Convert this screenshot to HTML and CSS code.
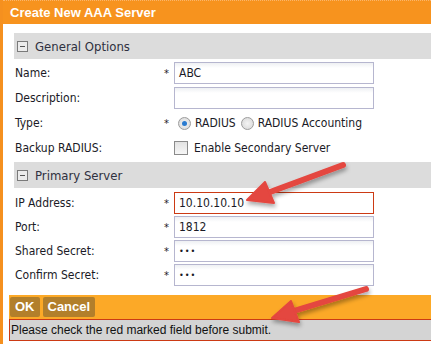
FILE: index.html
```html
<!DOCTYPE html>
<html lang="en">
<head>
    <meta charset="UTF-8">
    <title>Create New AAA Server</title>
    <link rel="stylesheet" href="styles.css">
</head>
<body>
    <div class="dialog">
        <div class="title">Create New AAA Server</div>
        <div class="content">
            <div class="section-head"><span class="minus"></span>General Options</div>
            <div class="rows rows-first">
                <label>Name:</label><span class="req">*</span><div class="field">ABC</div>
                <label>Description:</label><span class="req"></span><div class="field"></div>
                <label>Type:</label><span class="req">*</span>
                <div class="choice">
                    <span class="radio on"></span>RADIUS
                    <span class="radio"></span>RADIUS Accounting
                </div>
                <label>Backup RADIUS:</label><span class="req"></span>
                <div class="choice"><span class="check"></span>Enable Secondary Server</div>
            </div>

            <div class="section-head"><span class="minus"></span>Primary Server</div>
            <div class="rows rows-second">
                <label>IP Address:</label><span class="req">*</span><div class="field bad">10.10.10.10</div>
                <label>Port:</label><span class="req">*</span><div class="field">1812</div>
                <label>Shared Secret:</label><span class="req">*</span><div class="field secret">&bull;&bull;&bull;</div>
                <label>Confirm Secret:</label><span class="req">*</span><div class="field secret">&bull;&bull;&bull;</div>
            </div>
        </div>
        <div class="buttons">
            <span class="btn">OK</span><span class="btn">Cancel</span>
        </div>
        <div class="error">Please check the red marked field before submit.</div>
    </div>

    <!-- annotation arrows drawn over the screenshot -->
    <svg class="arrows" width="431" height="344" viewBox="0 0 431 344">
        <defs>
            <filter id="shade" x="-20%" y="-20%" width="140%" height="160%">
                <feDropShadow dx="1" dy="3" stdDeviation="2" flood-color="#000" flood-opacity="0.35"/>
            </filter>
        </defs>
        <g fill="#e4463f" stroke="#e4463f" filter="url(#shade)">
            <line x1="343" y1="165" x2="262" y2="195" stroke-width="6" stroke-linecap="round"/>
            <polygon points="247,200 274,203 265,182" stroke-width="2" stroke-linejoin="round"/>
            <line x1="366" y1="289" x2="287" y2="313" stroke-width="6" stroke-linecap="round"/>
            <polygon points="272,318 299,322 291,301" stroke-width="2" stroke-linejoin="round"/>
        </g>
    </svg>
</body>
</html>
```

FILE: styles.css
```css
body {
    margin: 0;
    background: #fff;
    font-family: "DejaVu Sans Condensed", "DejaVu Sans", Verdana, sans-serif;
    font-size: 12px;
    color: #1a1a26;
    width: 431px;
    height: 344px;
    overflow: hidden;
    position: relative;
}
.dialog {
    border-left: 3px solid #f5901f;
    height: 344px;
    box-sizing: border-box;
}
.title {
    height: 24px;
    line-height: 24px;
    background: #f7931e;
    border-top: 1px dotted #fbb56a;
    box-sizing: border-box;
    color: #fff;
    font-family: "Liberation Sans", Arial, sans-serif;
    font-weight: bold;
    font-size: 13px;
    padding-left: 7px;
}
.content {
    padding: 9px 0 0 11px;
}
.section-head {
    height: 26px;
    background: #dcdcdc;
    display: flex;
    align-items: center;
    padding-left: 3px;
    font-size: 13px;
    color: #2f3040;
}
.minus {
    width: 9px;
    height: 9px;
    border: 1px solid #7a7a7a;
    margin-right: 7px;
    position: relative;
    background: #ececec;
}
.minus::after {
    content: "";
    position: absolute;
    left: 2px;
    right: 2px;
    top: 4px;
    height: 1px;
    background: #555;
}
.rows {
    display: grid;
    grid-template-columns: 150px 10px 200px;
    grid-auto-rows: 24px;
    align-items: center;
}
.rows-first {
    padding: 2px 0 2px;
    row-gap: 1px;
}
.rows-second {
    padding: 3px 0 0;
}
.rows label {
    padding-left: 1px;
}
.req {
    font-size: 11px;
}
.field {
    height: 22px;
    box-sizing: border-box;
    border: 1px solid #b6b6cf;
    background: linear-gradient(#eef0f3, #fff 5px);
    padding-left: 4px;
    line-height: 20px;
}
.field.bad {
    border-color: #cc3a14;
    background: #fff;
}
.field.secret {
    font-size: 9px;
    letter-spacing: 1px;
}
.choice {
    display: flex;
    align-items: center;
}
.radio {
    width: 11px;
    height: 11px;
    border-radius: 50%;
    border: 1px solid #9c9c9c;
    background: radial-gradient(#f4f4f4, #d6d6d6);
    margin: 0 4px 0 4px;
    position: relative;
}
.radio + .radio, .radio:not(.on) {
    margin-left: 5px;
}
.radio.on::after {
    content: "";
    position: absolute;
    left: 3px;
    top: 3px;
    width: 5px;
    height: 5px;
    border-radius: 50%;
    background: #2a7bd0;
}
.check {
    width: 12px;
    height: 12px;
    border: 1px solid #8a8a8a;
    background: linear-gradient(#e2e2e2, #f6f6f6);
    margin-right: 6px;
}
.buttons {
    margin: 8px 0 0 6px;
    height: 24px;
    background: #fca927;
    display: flex;
    align-items: center;
    gap: 3px;
    padding-left: 1px;
}
.btn {
    height: 20px;
    line-height: 20px;
    padding: 0 5px;
    background: #b27f2b;
    border-radius: 2px;
    color: #fff;
    font-family: "Liberation Sans", Arial, sans-serif;
    font-weight: bold;
    font-size: 13px;
}
.error {
    margin-left: 6px;
    height: 22px;
    box-sizing: border-box;
    border: 1px solid #cc3a14;
    border-right: none;
    background: #d4d4d4;
    line-height: 20px;
    padding-left: 1px;
    font-family: "Liberation Sans", Arial, sans-serif;
    font-size: 12px;
    color: #111;
}
.arrows {
    position: absolute;
    left: 0;
    top: 0;
}
```
